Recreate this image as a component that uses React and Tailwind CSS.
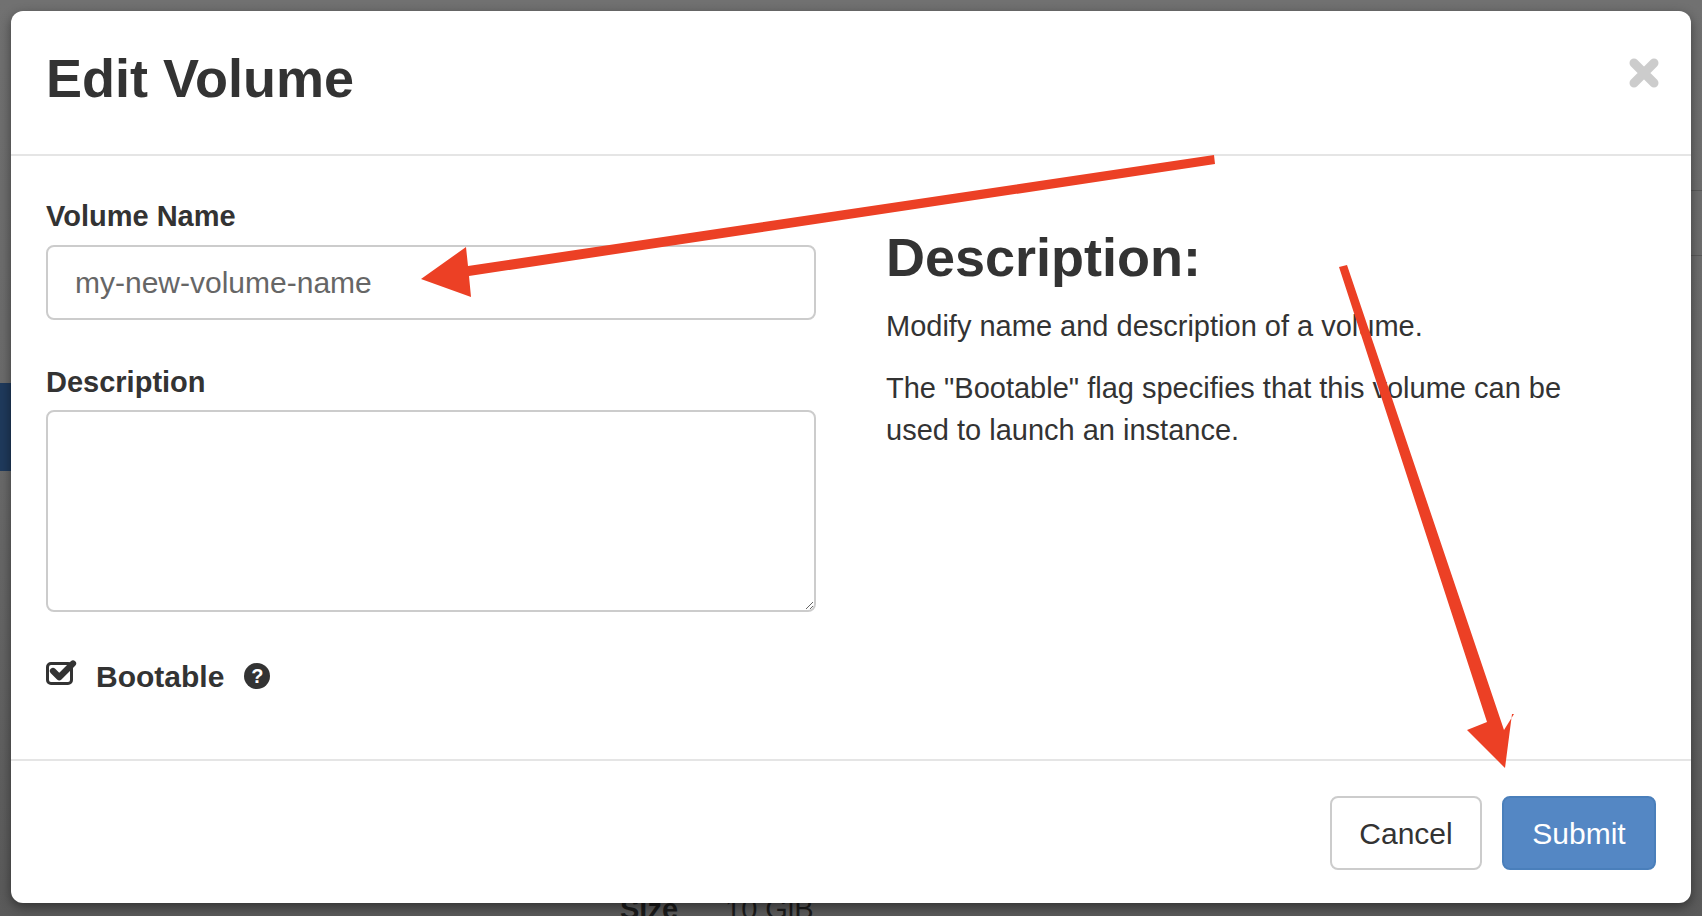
import React from 'react';
import { Check } from 'lucide-react';

const font = "font-['Liberation_Sans',Arial,sans-serif]";

const Arrows = () => (
  <svg className="absolute inset-0 pointer-events-none" width="1702" height="916" viewBox="0 0 1702 916">
    <g fill="#ec4025">
      <polygon points="1214,155 1215,164 469,276 471,297 421,279 466,247 468,266" />
      <polygon points="1339,267 1347,265 1504,730 1514,714 1512,714 1505,768 1467,730 1487,722" />
    </g>
  </svg>
);

const Backdrop = () => (
  <div className="absolute inset-0 bg-gradient-to-b from-[#717171] via-[#6a6a6a] to-[#5a5a5a]">
    <div className="absolute left-0 top-[383px] w-[11px] h-[88px] bg-[#1f3a5c]" />
    <div className="absolute right-0 top-[190px] w-[11px] h-[66px] border-y border-[#5a5a5a]" />
    <span className="absolute left-[620px] top-[895px] text-[29px] font-bold text-[#1a1a1a] leading-none">Size</span>
    <span className="absolute left-[725px] top-[895px] text-[29px] text-[#1a1a1a] leading-none">10 GiB</span>
  </div>
);

export default function App() {
  return (
    <div className={`relative w-[1702px] h-[916px] overflow-hidden ${font} text-[#333333]`}>
      <Backdrop />
      <div className="absolute left-[11px] top-[11px] w-[1680px] h-[892px] bg-white rounded-[12px] shadow-[0_4px_12px_rgba(0,0,0,0.45)] flex flex-col">
        <div className="h-[145px] shrink-0 border-b-2 border-[#e5e5e5] px-[35px] flex items-center justify-between">
          <h3 className="text-[54px] font-bold leading-none -mt-[10px]">Edit Volume</h3>
          <svg className="-mt-[20px] -mr-[3px]" width="30" height="30" viewBox="0 0 30 30">
            <path d="M5 5 L25 25 M25 5 L5 25" stroke="#cccccc" strokeWidth="9" strokeLinecap="round" />
          </svg>
        </div>
        <div className="flex-1 flex px-[35px]">
          <div className="w-[770px] shrink-0 pt-[39px]">
            <label className="block text-[29px] font-bold leading-[42px]">Volume Name</label>
            <div className="mt-[8px] h-[75px] border-2 border-[#cccccc] rounded-[8px] px-[27px] flex items-center text-[30px] text-[#666666]">
              my-new-volume-name
            </div>
            <label className="block mt-[41px] text-[29px] font-bold leading-[42px]">Description</label>
            <textarea className="block mt-[7px] w-full h-[202px] border-2 border-[#cccccc] rounded-[8px] outline-none" />
            <div className="mt-[43px] flex items-center h-[42px]">
              <span className="w-[27px] h-[23px] border-[3px] border-[#333333] rounded-[5px] relative -mt-[5px]">
                <Check className="absolute -top-[9px] -left-[1px]" size={30} strokeWidth={5} color="#333333" />
              </span>
              <span className="ml-[23px] text-[30px] font-bold">Bootable</span>
              <span className="ml-[20px] w-[26px] h-[26px] rounded-full bg-[#333333] text-white text-[20px] font-bold flex items-center justify-center">?</span>
            </div>
          </div>
          <div className="ml-[70px] flex-1 pt-[74px] pr-[60px]">
            <h4 className="text-[54px] font-bold leading-none">Description:</h4>
            <p className="mt-[21px] text-[29px] leading-[42px]">Modify name and description of a volume.</p>
            <p className="mt-[20px] text-[29px] leading-[42px]">The "Bootable" flag specifies that this volume can be used to launch an instance.</p>
          </div>
        </div>
        <div className="h-[144px] shrink-0 border-t-2 border-[#e5e5e5] px-[35px] flex items-start justify-end gap-[20px] pt-[35px]">
          <button className="w-[152px] h-[74px] border-2 border-[#cccccc] rounded-[8px] bg-white text-[30px]">Cancel</button>
          <button className="w-[154px] h-[74px] border-2 border-[#4a7fbb] rounded-[8px] bg-[#5487c4] text-white text-[30px]">Submit</button>
        </div>
      </div>
      <Arrows />
    </div>
  );
}
